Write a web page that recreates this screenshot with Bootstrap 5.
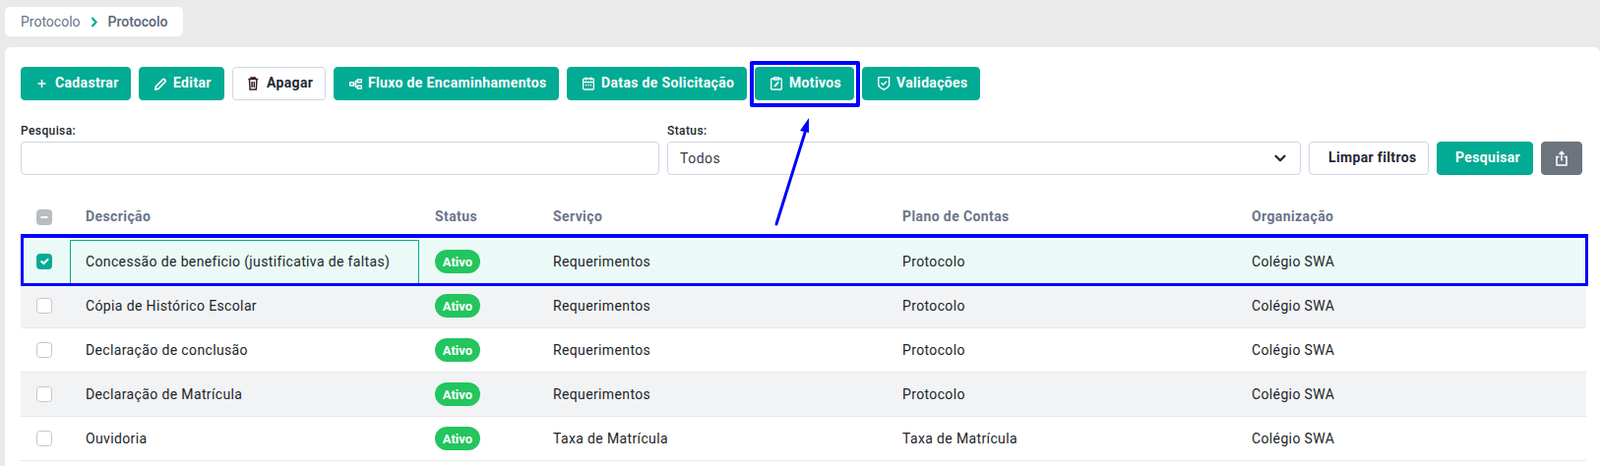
<!DOCTYPE html>
<html lang="pt-br">
<head>
  <meta charset="UTF-8" />
  <title>Protocolo</title>
  <link href="https://cdn.jsdelivr.net/npm/bootstrap@5.3.3/dist/css/bootstrap.min.css" rel="stylesheet" />
  <style>
    html, body { height: 474px; overflow: hidden; }
    body { background: #eaeaea; font-family: Roboto, "Liberation Sans", sans-serif; font-size: 14px; color: #212529; letter-spacing: .3px; }
    svg { flex-shrink: 0; }
    .page-wrap { padding: 7px 0 0 5px; }
    .crumbs { height: 30px; width: 181px; padding: 0 16px; border-radius: 5px; color: #68758c; letter-spacing: 0; }
    .crumbs b { font-weight: 500; color: #5a6679; }
    .crumbs svg { margin: 0 10px; }
    .panel { margin-top: 11px; padding: 20px 14px 0 16px; height: 426px; border-radius: 6px 6px 0 0; }
    .acao { height: 34px; padding: 0 0 2px 15px; font-size: 14px; font-weight: 700; letter-spacing: .35px; border-radius: 4px; display: inline-flex; align-items: center; gap: 6px; white-space: nowrap; }
    .acao svg { margin-top: 2px; }
    .acao-verde { background: #02ab93; border: 1px solid #02ab93; color: #fff; }
    .acao-verde:hover { background: #02ab93; color: #fff; }
    .acao-branco { background: #fff; border: 1px solid #cfd6e2; color: #1f2937; }
    .acao-cinza { background: #6c757d; border: 1px solid #6c757d; color: #fff; width: 42px; padding: 0; justify-content: center; }
    .acao-cinza svg { margin-top: 0; }
    .acao-limpar { padding-left: 19px; }
    .acao-pesquisar { padding-left: 18px; }
    .acoes-linha { gap: 8px; }
    .rotulo { font-size: 12px; font-weight: 500; line-height: 14px; margin: 0 0 4px; letter-spacing: .4px; display: block; }
    .filtros { margin-top: 24px; gap: 8px; }
    .campo { height: 34px; border: 1px solid #cfd6e2; border-radius: 4px; font-size: 14px; padding: 0 12px; letter-spacing: .5px; color: #333b47; }
    .campo-a { width: 649px; }
    .campo-b { width: 644px; background-image: url("data:image/svg+xml,%3csvg xmlns='http://www.w3.org/2000/svg' viewBox='0 0 16 16'%3e%3cpath fill='none' stroke='%231f2937' stroke-linecap='round' stroke-linejoin='round' stroke-width='3' d='m2 5 6 6 6-6'/%3e%3c/svg%3e"); }
    .tabela { margin: 20px 0 0; width: 1591px; table-layout: fixed; border-collapse: separate; border-spacing: 0; }
    .tabela tr { border: 0; }
    .tabela th { height: 46px; padding: 0 16px 1px; font-size: 14px; font-weight: 700; color: #69758a; border: 0; vertical-align: middle; letter-spacing: .4px; background: transparent; }
    .tabela td { height: 45px; padding: 0 16px; vertical-align: middle; border: 0; border-bottom: 1px solid #e6e8eb; background: #fff; color: #212529; box-shadow: none; letter-spacing: .365px; }
    .tabela tr.zebra td { background: #f2f3f5; }
    .tabela tr.marcada td { background: #ebfaf7; border-bottom-color: #ebfaf7; }
    .tabela tr.marcada td.foco { outline: 1px solid #02ab93; outline-offset: -1px; }
    .tabela .cx { padding: 0 0 0 16px; }
    .marca { width: 16px; height: 16px; margin: 0; display: block; border-color: #c6c6c8; border-radius: 4px; }
    .marca[type=checkbox]:checked { background-color: #02ab93; border-color: #02ab93; }
    .marca[type=checkbox]:indeterminate { background-color: #b9bcc0; border-color: #b9bcc0; }
    .selo { background: #22c55e; width: 46px; height: 24px; display: inline-flex; align-items: center; justify-content: center; padding: 0; font-size: 13px; font-weight: 700; border-radius: 12px; letter-spacing: 0; }
    .anota-caixa { position: absolute; border: 3px solid #0000ff; pointer-events: none; }
    .anota-motivos { left: 762px; top: 62px; width: 112px; height: 47px; border-width: 4px; border-radius: 2px; }
    .anota-linha { left: 21px; top: 238px; width: 1593px; height: 53px; border-top-width: 4px; }
    .anota-seta { position: absolute; left: 780px; top: 115px; width: 50px; height: 118px; }
  </style>
</head>
<body>
  <div class="page-wrap">
    <div class="crumbs bg-white d-flex align-items-center">
      <span>Protocolo</span>
      <svg width="8" height="11" viewBox="0 0 8 11" fill="none" stroke="#02ab93" stroke-width="2.200"><path d="M1.500 1l4 4.500-4 4.500"/></svg>
      <b>Protocolo</b>
    </div>

    <div class="panel bg-white">
      <div class="d-flex acoes-linha">
        <button class="btn acao acao-verde" style="width:112px">
          <svg width="13" height="14" viewBox="0 0 13 14" stroke="#fff" stroke-width="1.500"><path d="M5.500 3v8M1.500 7h8"/></svg>Cadastrar
        </button>
        <button class="btn acao acao-verde" style="width:87px">
          <svg width="13" height="14" viewBox="0 0 13 14" fill="none" stroke="#fff" stroke-width="1.700"><path d="M.9 13l.7-3.300L8.500 2.800a1.200 1.200 0 0 1 1.700 0l.7.7a1.200 1.200 0 0 1 0 1.700L4.100 12.200z"/></svg>Editar
        </button>
        <button class="btn acao acao-branco" style="width:95px">
          <svg width="13" height="14" viewBox="0 0 13 14" fill="none" stroke="#3b1f2b" stroke-width="1.500"><path d="M.3 2.600h10M3 2.600V1h4.400v1.600M1.500 2.600l.5 10.400h6.400l.5-10.400M4.100 5v6M6.300 5v6"/></svg>Apagar
        </button>
        <button class="btn acao acao-verde" style="width:229px">
          <svg width="13" height="14" viewBox="0 0 13 14" fill="none" stroke="#fff" stroke-width="1.400"><path d="M.6 6h3.800v3H.6zM8.400 3h4v2.800h-4zM8.400 9.200h4V12h-4zM4.400 7.500H6.500V4.400h1.900M6.500 7.500v3.100h1.900"/></svg>Fluxo de Encaminhamentos
        </button>
        <button class="btn acao acao-verde" style="width:183px">
          <svg width="13" height="14" viewBox="0 0 13 14" fill="none" stroke="#fff" stroke-width="1.300"><rect x=".6" y="2" width="10.800" height="11" rx="1.300"/><path d="M.6 5.500h10.800M3.500 .5v3M8.500 .5v3M2.800 8.500h1.400M5.300 8.500h1.400M7.800 8.500h1.400"/></svg>Datas de Solicitação
        </button>
        <button class="btn acao acao-verde" style="width:101px">
          <svg width="13" height="14" viewBox="0 0 13 14" fill="none" stroke="#fff" stroke-width="1.300"><path d="M3.500 2H1.500a.8.8 0 0 0-.8.8v9.400a.8.8 0 0 0 .8.8h9a.8.8 0 0 0 .8-.8V2.800a.8.8 0 0 0-.8-.8H8.500M3.500 1h5v2h-5z"/><path d="M3.500 10.500l.4-1.800 3.600-3.900 1.400 1.300-3.600 3.900z" fill="#fff" stroke="none"/></svg>Motivos
        </button>
        <button class="btn acao acao-verde" style="width:120px">
          <svg width="13" height="14" viewBox="0 0 13 14" fill="none" stroke="#fff" stroke-width="1.400"><path d="M.8 .8h10.800v8.400l-2 2.300-3.400 1.800-3.400-1.800-2-2.300z" transform="translate(0 -.2)"/><path d="M3.500 6.300l2 2 3.500-3.600"/></svg>Validações
        </button>
      </div>

      <div class="d-flex align-items-end filtros">
        <div>
          <label class="rotulo" for="pesquisa">Pesquisa:</label>
          <input id="pesquisa" class="form-control campo campo-a" type="text" />
        </div>
        <div>
          <label class="rotulo" for="status">Status:</label>
          <select id="status" class="form-select campo campo-b"><option>Todos</option></select>
        </div>
        <button class="btn acao acao-limpar acao-branco" style="width:122px">Limpar filtros</button>
        <button class="btn acao acao-pesquisar acao-verde" style="width:98px">Pesquisar</button>
        <button class="btn acao acao-cinza">
          <svg width="14" height="16" viewBox="0 0 14 16" fill="none" stroke="#fff" stroke-width="1.500"><path d="M4.500 6.500H2v8.500h10V6.500H9.500M7 10.500V1.500M4.500 3.900L7 1.400l2.500 2.500"/></svg>
        </button>
      </div>

      <table class="table tabela mb-0">
        <colgroup>
          <col style="width:50px" /><col style="width:355px" /><col style="width:120px" /><col style="width:355px" /><col style="width:355px" /><col />
        </colgroup>
        <thead>
          <tr>
            <th class="cx"><input id="todos" class="form-check-input marca" type="checkbox" /></th>
            <th>Descrição</th><th>Status</th><th>Serviço</th><th>Plano de Contas</th><th>Organização</th>
          </tr>
        </thead>
        <tbody>
          <tr class="marcada">
            <td class="cx"><input class="form-check-input marca" type="checkbox" checked /></td>
            <td class="foco">Concessão de beneficio (justificativa de faltas)</td>
            <td><span class="badge selo">Ativo</span></td><td>Requerimentos</td><td>Protocolo</td><td>Colégio SWA</td>
          </tr>
          <tr class="zebra">
            <td class="cx"><input class="form-check-input marca" type="checkbox" /></td>
            <td>Cópia de Histórico Escolar</td>
            <td><span class="badge selo">Ativo</span></td><td>Requerimentos</td><td>Protocolo</td><td>Colégio SWA</td>
          </tr>
          <tr>
            <td class="cx"><input class="form-check-input marca" type="checkbox" /></td>
            <td>Declaração de conclusão</td>
            <td><span class="badge selo">Ativo</span></td><td>Requerimentos</td><td>Protocolo</td><td>Colégio SWA</td>
          </tr>
          <tr class="zebra">
            <td class="cx"><input class="form-check-input marca" type="checkbox" /></td>
            <td>Declaração de Matrícula</td>
            <td><span class="badge selo">Ativo</span></td><td>Requerimentos</td><td>Protocolo</td><td>Colégio SWA</td>
          </tr>
          <tr>
            <td class="cx"><input class="form-check-input marca" type="checkbox" /></td>
            <td>Ouvidoria</td>
            <td><span class="badge selo">Ativo</span></td><td>Taxa de Matrícula</td><td>Taxa de Matrícula</td><td>Colégio SWA</td>
          </tr>
        </tbody>
      </table>
    </div>
  </div>

  <!-- marcacoes azuis por cima da tela -->
  <div class="anota-caixa anota-motivos"></div>
  <div class="anota-caixa anota-linha"></div>
  <svg class="anota-seta" viewBox="0 0 50 118">
    <path d="M9 113L38 20" stroke="#0000ff" stroke-width="3" fill="none" stroke-linecap="round"/>
    <path d="M42 5L42 20 33 18z" fill="#0000ff"/>
  </svg>

  <script src="https://cdn.jsdelivr.net/npm/bootstrap@5.3.3/dist/js/bootstrap.bundle.min.js"></script>
  <script>
    document.getElementById("todos").indeterminate = true;
  </script>
</body>
</html>
